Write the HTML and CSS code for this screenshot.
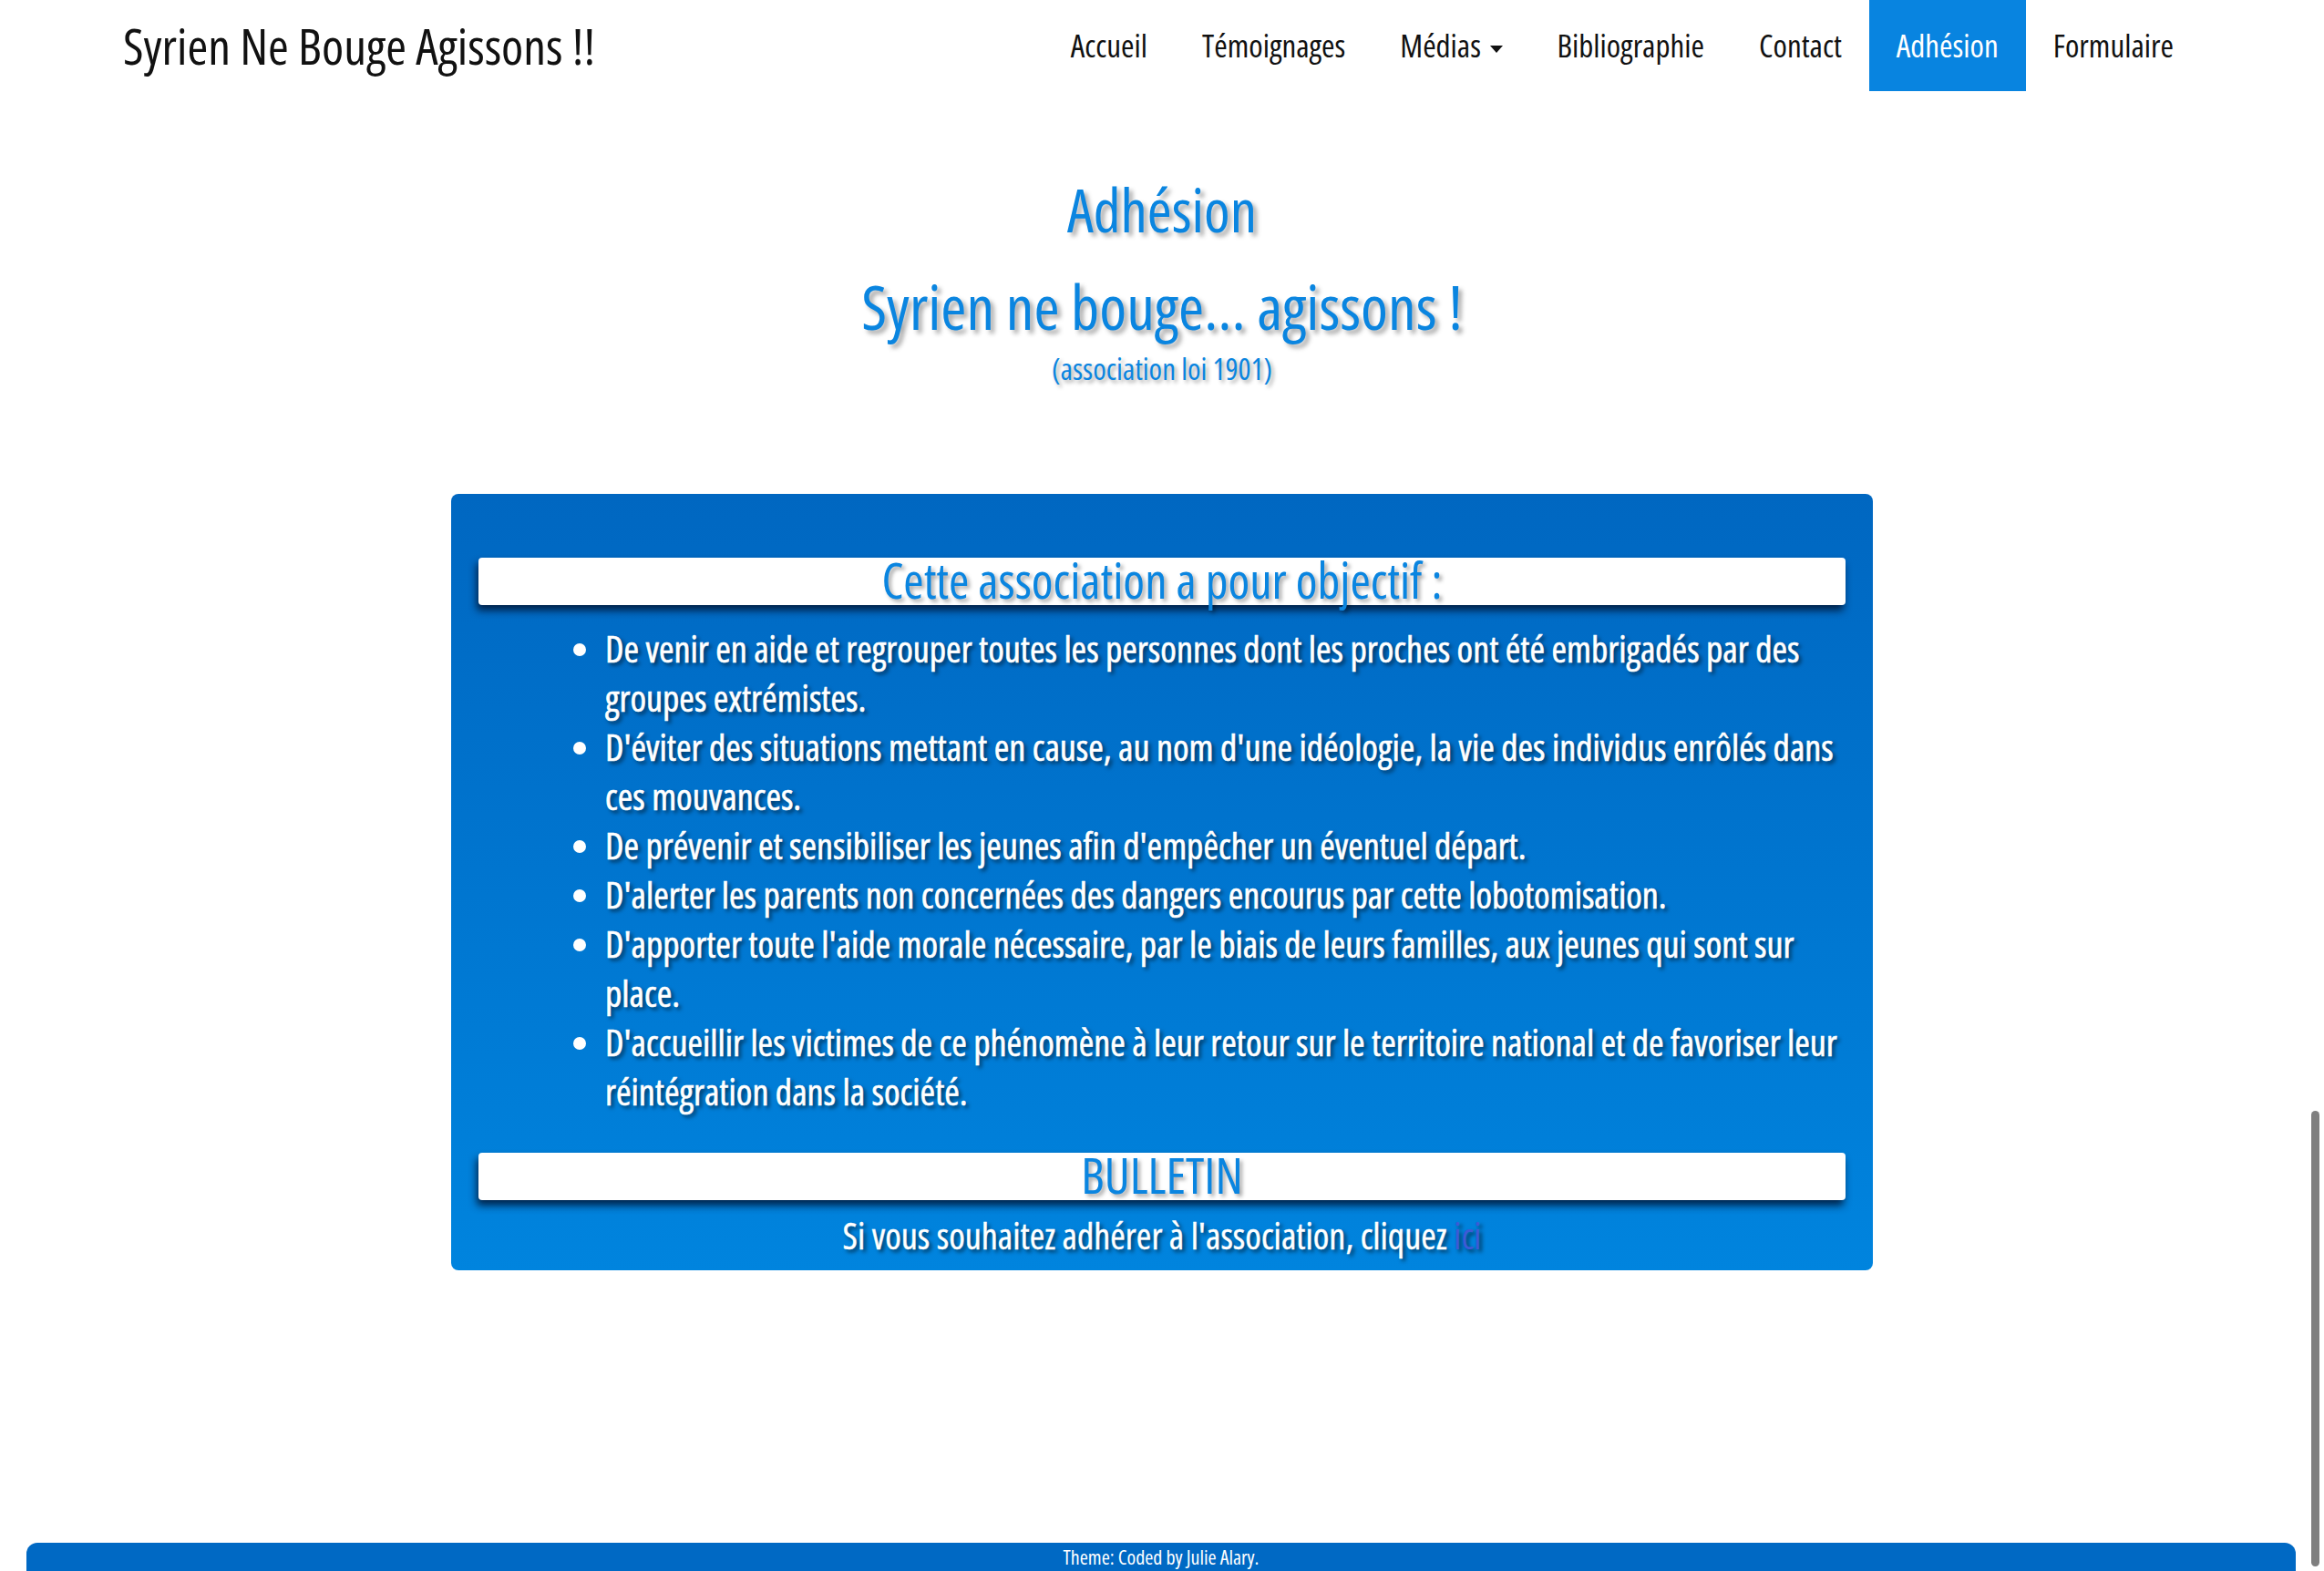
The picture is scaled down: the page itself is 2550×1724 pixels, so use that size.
FILE: index.html
```html
<!DOCTYPE html>
<html lang="fr">
<head>
<meta charset="utf-8">
<title>Adhésion - Syrien Ne Bouge Agissons !!</title>
<link rel="stylesheet" href="styles.css">
</head>
<body>
<nav class="navbar">
  <div class="container nav-inner">
    <a class="brand" href="#">Syrien Ne Bouge Agissons !!</a>
    <ul class="nav">
      <li><a href="#">Accueil</a></li>
      <li><a href="#">Témoignages</a></li>
      <li><a href="#">Médias <span class="caret"></span></a></li>
      <li><a href="#">Bibliographie</a></li>
      <li><a href="#">Contact</a></li>
      <li class="active"><a href="#">Adhésion</a></li>
      <li><a href="#">Formulaire</a></li>
    </ul>
  </div>
</nav>
<main class="content">
  <h1 class="page-title">Adhésion</h1>
  <h2 class="assoc-name">Syrien ne bouge… agissons !</h2>
  <p class="assoc-law">(association loi 1901)</p>
  <section class="panel">
    <h3 class="panel-bar">Cette association a pour objectif :</h3>
    <ul class="goals">
      <li>De venir en aide et regrouper toutes les personnes dont les proches ont été embrigadés par des groupes extrémistes.</li>
      <li>D'éviter des situations mettant en cause, au nom d'une idéologie, la vie des individus enrôlés dans ces mouvances.</li>
      <li>De prévenir et sensibiliser les jeunes afin d'empêcher un éventuel départ.</li>
      <li>D'alerter les parents non concernées des dangers encourus par cette lobotomisation.</li>
      <li>D'apporter toute l'aide morale nécessaire, par le biais de leurs familles, aux jeunes qui sont sur place.</li>
      <li>D'accueillir les victimes de ce phénomène à leur retour sur le territoire national et de favoriser leur réintégration dans la société.</li>
    </ul>
    <h3 class="panel-bar">BULLETIN</h3>
    <p class="join">Si vous souhaitez adhérer à l'association, cliquez <a href="#">ici</a></p>
  </section>
</main>
<footer class="footer">Theme: Coded by Julie Alary.</footer>
<div class="scroll-thumb"></div>
</body>
</html>
```
FILE: styles.css
```css
html, body {
  margin: 0;
  padding: 0;
  background: #fff;
}
body {
  font-family: "Open Sans", "Roboto", sans-serif;
  font-stretch: 75%;
  color: #000;
  min-height: 1724px;
  display: flex;
  flex-direction: column;
  overflow: hidden;
}
a { text-decoration: none; }

.navbar { height: 100px; }
.container {
  width: 2340px;
  margin: 0 auto;
  padding: 0 30px;
  box-sizing: border-box;
}
.nav-inner {
  display: flex;
  justify-content: space-between;
  align-items: stretch;
  height: 100px;
}
.brand {
  font-size: 55px;
  line-height: 100px;
  color: #111;
}
.nav {
  display: flex;
  list-style: none;
  margin: 0;
  padding: 0;
}
.nav li a {
  display: block;
  padding: 0 30px;
  line-height: 100px;
  font-size: 35px;
  color: #111;
}
.nav li.active a {
  background: #0884e0;
  color: #fff;
}
.caret {
  display: inline-block;
  width: 0;
  height: 0;
  margin-left: 3px;
  vertical-align: middle;
  border-top: 8px solid #111;
  border-left: 7px solid transparent;
  border-right: 7px solid transparent;
}

.content {
  flex: 1;
  display: flex;
  flex-direction: column;
  align-items: center;
}
.page-title {
  margin: 95px 0 0;
  font-size: 65px;
  line-height: 70px;
  font-weight: normal;
  color: #0a85e0;
  text-shadow: 4px 4px 5px rgba(0,0,0,0.35);
}
.assoc-name {
  margin: 36px 0 0;
  font-size: 68px;
  line-height: 70px;
  font-weight: normal;
  color: #0a85e0;
  text-shadow: 4px 4px 5px rgba(0,0,0,0.35);
}
.assoc-law {
  margin: 14px 0 0;
  font-size: 33px;
  line-height: 40px;
  color: #0a85e0;
  text-shadow: 3px 3px 4px rgba(0,0,0,0.35);
}

.panel {
  margin-top: 117px;
  width: 1560px;
  box-sizing: border-box;
  padding: 70px 30px 11px;
  border-radius: 8px;
  background: linear-gradient(#0067c1, #0084de);
  color: #fff;
}
.panel-bar {
  margin: 0;
  height: 52px;
  background: #fff;
  border-radius: 4px;
  box-shadow: -2px 6px 8px rgba(0, 20, 50, 0.85);
  text-align: center;
  font-size: 54px;
  line-height: 48px;
  font-weight: normal;
  color: #0a85e0;
  text-shadow: 3px 3px 4px rgba(0,0,0,0.35);
}
.goals {
  margin: 21px 0 40px;
  padding: 0 0 0 139px;
  font-size: 40px;
  line-height: 54px;
  -webkit-text-stroke: 0.6px #fff;
  text-shadow: 3px 3px 4px rgba(0,0,0,0.6);
}
.join {
  margin: 12px 0 0;
  text-align: center;
  font-size: 40px;
  line-height: 54px;
  -webkit-text-stroke: 0.4px #fff;
  text-shadow: 3px 3px 4px rgba(0,0,0,0.6);
}
.join a {
  color: #3d5ad6;
  -webkit-text-stroke: 0;
}

.footer {
  margin: 0 31px 0 29px;
  height: 31px;
  background: #0069c4;
  border-radius: 12px 12px 0 0;
  color: #fff;
  font-size: 22px;
  line-height: 31px;
  text-align: center;
}
.scroll-thumb {
  position: fixed;
  right: 5px;
  top: 1219px;
  width: 9px;
  height: 500px;
  border-radius: 5px;
  background: #7f7f7f;
}
```
